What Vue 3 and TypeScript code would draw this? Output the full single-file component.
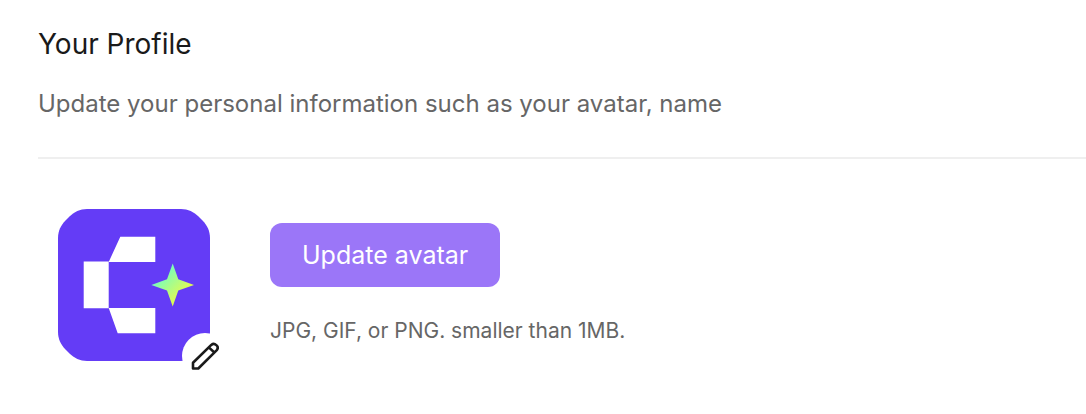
<script setup lang="ts">
const title: string = 'Your Profile'
const description: string = 'Update your personal information such as your avatar, name'
const hint: string = 'JPG, GIF, or PNG. smaller than 1MB.'
</script>

<template>
  <main class="profile">
    <header class="intro">
      <h1 class="title">{{ title }}</h1>
      <p class="description">{{ description }}</p>
    </header>
    <section class="avatar-row">
      <div class="avatar">
        <svg class="logo" viewBox="0 0 152 152" role="img" aria-label="Avatar">
          <defs>
            <linearGradient id="spark" x1="0.2" y1="0.2" x2="0.75" y2="0.75">
              <stop offset="0" stop-color="#6dfdc8" />
              <stop offset="1" stop-color="#e4fb4e" />
            </linearGradient>
          </defs>
          <path
            fill="#643cf6"
            d="M0 29C0 22 3 16 7.500 11.500L11.500 7.500C16 3 22 0 29 0H123C130 0 136 3 140.500 7.500L144.500 11.500C149 16 152 22 152 29V123C152 130 149 136 144.500 140.500L140.500 144.500C136 149 130 152 123 152H29C22 152 16 149 11.500 144.500L7.500 140.500C3 136 0 130 0 123Z"
          />
          <path
            fill="#fff"
            d="M62.300 27.700H97.300V53H50.700ZM25.700 52.500H50.700V99.300H25.700ZM50.700 99H97.300V124.300H59.700Z"
          />
          <path
            fill="url(#spark)"
            d="M114.700 54.500L120.300 70.300L136 76L120.300 81.500L114.700 97.500L109 81.500L93.300 76L109 70.300Z"
          />
        </svg>
        <button class="edit" type="button" aria-label="Edit avatar">
          <svg class="pencil" viewBox="0 0 28 28" aria-hidden="true">
            <path d="M2 26.500V20.800L20.300 2.900C23.500 .2 28.700 4.500 25.800 8.100L7.300 26.500ZM17.800 5.400L23.400 10.500" />
          </svg>
        </button>
      </div>
      <div class="upload">
        <button class="update" type="button">Update avatar</button>
        <p class="hint">{{ hint }}</p>
      </div>
    </section>
  </main>
</template>

<style>
body {
  margin: 0;
  background: #fff;
}
</style>

<style scoped>
.profile {
  padding: 24px 0 40px 38px;
  font-family: Inter, "Liberation Sans", sans-serif;
  color: #666;
}
.intro {
  padding-bottom: 37px;
  border-bottom: 2px solid #efefef;
}
.title,
.description,
.hint {
  margin: 0;
  font-weight: 400;
}
.title {
  color: #1a1a1a;
  font-size: 28px;
  line-height: 40px;
}
.description {
  margin-top: 24px;
  font-size: 24px;
  line-height: 32px;
}
.avatar-row {
  display: flex;
  align-items: flex-start;
  gap: 60px;
  padding: 50px 20px 0;
}
.avatar {
  position: relative;
  flex: none;
  width: 152px;
  height: 152px;
}
.logo {
  display: block;
  width: 100%;
}
.edit {
  position: absolute;
  right: -18px;
  bottom: -18px;
  display: flex;
  align-items: center;
  justify-content: center;
  width: 46px;
  height: 46px;
  padding: 0;
  border: 0;
  border-radius: 50%;
  background: #fff;
  cursor: pointer;
}
.pencil {
  width: 28px;
  height: 28px;
  fill: none;
  stroke: #1a1a1a;
  stroke-width: 2.600;
  stroke-linejoin: round;
}
.upload {
  display: flex;
  flex-direction: column;
  align-items: flex-start;
  gap: 28px;
  padding-top: 14px;
}
.update {
  padding: 16px 32px;
  border: 0;
  border-radius: 12px;
  background: #9b76f8;
  color: #fff;
  font-family: inherit;
  font-size: 25px;
  line-height: 32px;
  cursor: pointer;
}
.hint {
  font-size: 21px;
  line-height: 32px;
}
</style>
